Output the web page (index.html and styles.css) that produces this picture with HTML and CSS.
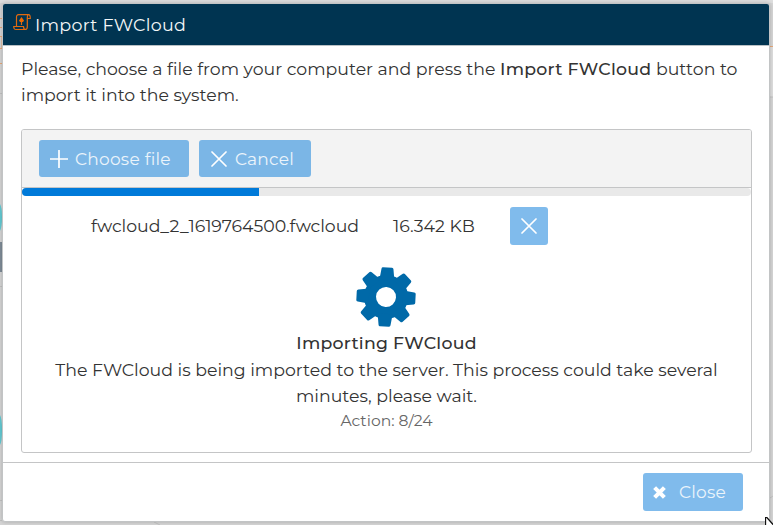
FILE: index.html
```html
<!DOCTYPE html>
<html lang="en">
<head>
<meta charset="utf-8">
<title>Import FWCloud</title>
<link rel="stylesheet" href="styles.css">
</head>
<body>
<svg class="backdrop" width="773" height="525" viewBox="0 0 773 525" aria-hidden="true">
  <rect width="773" height="525" fill="#d5d5d5"/>
  <path d="M0 0H773V3H0zM770 47h3v50h-3z" fill="#dedede"/>
  <path d="M0 18.500h2M0 27.500h2M0 36.500h2v12H0M0 63.500h2M770 46.500h3" stroke="#e7a878" fill="none"/>
  <path d="M0 93.500h2M0 286.500h2M0 500.500h2M0 520.500h2M154 522l6 3M770 97h3M770 498l3-2" stroke="#c2c2c2"/>
  <path d="M0 204q2 3 2 13t-2 14zM0 415q2 3 2 15t-2 15z" fill="#62cad3"/>
  <path d="M0 242h2v30H0z" fill="#7f8c98"/>
</svg>
<section class="dialog">
  <header class="dialog-header">
    <svg class="scroll-icon" width="18" height="17" viewBox="0 0 18 17"><path d="M3.500 12.500V3Q3.500.7 5.500.7H15.500Q17.300.7 17.300 4.500H14.300M14.300 4.500V13Q14.300 15.500 12 15.500H3Q.7 15.500.7 12.500H10.500Q10.500 15.500 12.500 15.500M14.300 4.500Q14.300.7 15.500.7M8.500 11V5" fill="none" stroke="#e06a10" stroke-width="1.200"/><path d="M8.500 3 11 6.500 10 8H7L6 6.500z" fill="#f06a00"/></svg>
    <h1>Import FWCloud</h1>
  </header>
  <main class="dialog-body">
    <p class="intro"><span>Please, choose a file from your computer and press the <b>Import FWCloud</b> button to</span><br><span class="intro-last">import it into the system.</span></p>
    <div class="upload">
      <div class="toolbar">
        <button class="btn choose"><svg width="18" height="18" viewBox="0 0 18 18"><path d="M9 .5v17M.5 9h17"/></svg><span>Choose file</span></button>
        <button class="btn cancel"><svg width="16" height="16" viewBox="0 0 16 16"><path d="m1 1 14 14M15 1 1 15"/></svg><span>Cancel</span></button>
      </div>
      <div class="progress"><div class="progress-value"></div></div>
      <div class="file-row">
        <span class="file-name">fwcloud_2_1619764500.fwcloud</span>
        <span class="file-size">16.342 KB</span>
        <button class="btn remove" aria-label="Remove"><svg width="16" height="16" viewBox="0 0 16 16"><path d="m1 1 14 14M15 1 1 15"/></svg></button>
      </div>
      <div class="status">
        <svg class="gear" width="60" height="60" viewBox="-30 -30 60 60">
          <defs><path id="tooth" d="M-7.500-17-6-28Q-5.800-29.500-4.500-29.500H4.500Q5.800-29.500 6-28L7.500-17z"/></defs>
          <g transform="rotate(3)" fill="#0069a8">
            <circle r="16" fill="none" stroke="#0069a8" stroke-width="12"/>
            <use href="#tooth"/><use href="#tooth" transform="rotate(45)"/><use href="#tooth" transform="rotate(90)"/><use href="#tooth" transform="rotate(135)"/><use href="#tooth" transform="rotate(180)"/><use href="#tooth" transform="rotate(225)"/><use href="#tooth" transform="rotate(270)"/><use href="#tooth" transform="rotate(315)"/>
          </g>
        </svg>
        <h2>Importing FWCloud</h2>
        <p><span>The FWCloud is being imported to the server. This process could take several</span><br><span>minutes, please wait.</span></p>
        <small>Action: 8/24</small>
      </div>
    </div>
  </main>
  <footer class="dialog-footer">
    <button class="btn close"><svg width="13" height="13" viewBox="0 0 12 12"><path d="m1.500 1.500 9 9M10.500 1.500l-9 9"/></svg><span>Close</span></button>
  </footer>
</section>
<svg class="pointer" width="9" height="9" viewBox="0 0 9 9"><path d="M.5-1V9H8.500V8z" fill="#fff" stroke="#111" stroke-width="1.300"/></svg>
</body>
</html>
```
FILE: styles.css
```css
* { box-sizing: border-box; }
body {
  margin: 0;
  padding: 3px 3px 3px 2px;
  width: 773px;
  height: 525px;
  overflow: hidden;
  font: 17.330px/26px Montserrat, Inter, sans-serif;
  color: #333;
}
h1, h2, p { margin: 0; font-weight: 400; }
p, h1, h2, span { white-space: nowrap; }
.backdrop { position: absolute; top: 0; left: 0; z-index: -1; }
.dialog {
  width: 768px;
  height: 519px;
  display: flex;
  flex-direction: column;
  border: 1px solid #c2c4c5;
  border-radius: 3px;
  background: #fff;
  box-shadow: 0 0 4px rgba(0, 0, 0, .2);
}
.dialog-header {
  height: 42px;
  flex: none;
  display: flex;
  align-items: center;
  gap: 4px;
  padding-left: 10px;
  background: #003451;
  border-bottom: 1px solid #b9c1c5;
  border-radius: 2px 2px 0 0;
  color: #f4f7f8;
}
.scroll-icon { margin-top: -5px; }
h1 { font-size: 17.500px; letter-spacing: .25px; }
.dialog-body { flex: 1; padding: 10px 17px 0 18px; }
.intro { height: 73px; }
.intro-last { letter-spacing: -.02px; }
b { font-weight: 500; letter-spacing: .27px; }
.upload {
  width: 731px;
  height: 324px;
  border: 1px solid #c4c5c6;
  border-radius: 3px;
  overflow: hidden;
}
.toolbar {
  height: 58px;
  display: flex;
  gap: 10px;
  padding: 10px 17px;
  background: #f3f3f3;
  border-bottom: 1px solid #c4c5c6;
}
.btn {
  height: 37px;
  display: flex;
  align-items: center;
  padding: 0 0 0 11px;
  border: 0;
  border-radius: 3px;
  background: #7bb6e6;
  color: #ebf4fb;
  font: inherit;
  font-size: 17px;
}
.btn svg { fill: none; stroke: #fff; stroke-width: 1.700; stroke-linecap: round; flex: none; }
.choose { width: 150px; gap: 7px; letter-spacing: .25px; }
.cancel { width: 112px; gap: 8px; padding-left: 12px; letter-spacing: .2px; }
.progress { height: 8px; background: #e9e9e9; border-radius: 4px; overflow: hidden; }
.progress-value { width: 32.500%; height: 100%; background: #007ad9; }
.file-row {
  height: 60px;
  display: grid;
  grid-template-columns: 302px 117px 38px;
  align-items: center;
  padding-left: 69px;
}
.file-name { letter-spacing: -.03px; }
.remove { width: 38px; height: 38px; justify-content: center; padding: 0; background: #80bbec; }
.status { display: flex; flex-direction: column; align-items: center; text-align: center; padding-top: 11px; }
.gear { margin-right: 1px; }
h2 { margin-top: 3px; font-size: 17.330px; font-weight: 500; letter-spacing: .25px; }
.status p { margin-top: 1px; }
small { line-height: 24px; font-size: 15.600px; color: #666; }
.dialog-footer { height: 59px; border-top: 1px solid #c4c5c6; display: flex; justify-content: flex-end; padding: 10px 26px; }
.close { width: 100px; height: 38px; gap: 13px; padding-left: 10px; background: #80bbec; letter-spacing: .2px; }
.close svg { stroke-width: 3.800; stroke-linecap: butt; }
.pointer { position: absolute; left: 765px; top: 517px; }
```
